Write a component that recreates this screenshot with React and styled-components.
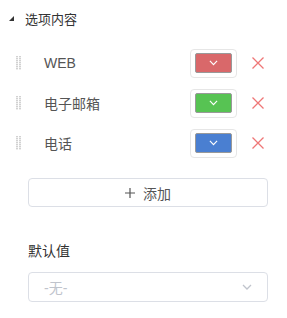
import React from 'react';
import styled, { createGlobalStyle } from 'styled-components';

const GlobalStyle = createGlobalStyle`
  body {
    margin: 0;
    background: #fff;
    font-family: "Liberation Sans", "Noto Sans CJK SC", sans-serif;
  }
`;

const Panel = styled.div`
  width: 287px;
  height: 318px;
  display: flex;
  flex-direction: column;
`;

const Header = styled.div`
  height: 36px;
  display: flex;
  align-items: center;
  padding-left: 9px;
  font-size: 13px;
  color: #333;
`;

const Caret = styled.span`
  width: 0;
  height: 0;
  border-left: 5px solid transparent;
  border-bottom: 5px solid #333;
  margin-right: 11px;
  margin-top: 1px;
`;

const List = styled.div`
  padding-top: 7px;
  display: flex;
  flex-direction: column;
`;

const Row = styled.div`
  height: 40px;
  display: flex;
  align-items: center;
  padding: 0 23px 0 16px;
`;

const Label = styled.div`
  flex: 1;
  margin-left: 23px;
  font-size: 14px;
  color: #555;
`;

const SwatchBox = styled.div`
  width: 47px;
  height: 29px;
  box-sizing: border-box;
  border: 1px solid #e6e6e6;
  border-radius: 4px;
  display: flex;
  align-items: center;
  justify-content: center;
`;

const Swatch = styled.div`
  width: 37px;
  height: 20px;
  box-sizing: border-box;
  border: 1px solid #999;
  border-radius: 2px;
  background: ${p => p.color};
  display: flex;
  align-items: center;
  justify-content: center;
`;

const RemoveButton = styled.button`
  width: 12px;
  height: 12px;
  padding: 0;
  margin-left: 15px;
  border: none;
  background: none;
  display: flex;
`;

const AddButton = styled.button`
  margin: 15px 0 0 28px;
  width: 240px;
  height: 29px;
  border: 1px solid #dcdfe6;
  border-radius: 4px;
  background: #fff;
  font-family: inherit;
  font-size: 14px;
  color: #555;
  display: flex;
  align-items: center;
  justify-content: center;
  gap: 8px;
  padding: 0;
`;

const FieldLabel = styled.div`
  margin: 34px 0 0 28px;
  line-height: 20px;
  font-size: 14px;
  color: #333;
`;

const Select = styled.div`
  margin: 11px 0 0 28px;
  width: 240px;
  height: 30px;
  box-sizing: border-box;
  border: 1px solid #dcdfe6;
  border-radius: 4px;
  display: flex;
  align-items: center;
  justify-content: space-between;
  padding: 0 15px 0 15px;
  font-size: 14px;
  color: #c0c4cc;
`;

const Grip = () => (
  <svg width="5" height="14" viewBox="0 0 5 14">
    {[0, 1, 2, 3, 4, 5, 6].map(r =>
      [0, 3].map(c => (
        <rect key={`${r}-${c}`} x={c} y={r * 2} width="2" height="1.4" fill="#d2d2d2" />
      ))
    )}
  </svg>
);

const Chevron = ({ color, w = 9 }) => (
  <svg width={w} height={w / 2 + 1} viewBox="0 0 10 6">
    <path d="M1 1 L5 5 L9 1" fill="none" stroke={color} strokeWidth="1.3" />
  </svg>
);

const Cross = () => (
  <svg width="12" height="12" viewBox="0 0 12 12">
    <path d="M0.5 0.5 L11.5 11.5 M11.5 0.5 L0.5 11.5" stroke="#ef7676" strokeWidth="1.3" />
  </svg>
);

const Plus = () => (
  <svg width="10" height="10" viewBox="0 0 10 10">
    <path d="M5 0 V10 M0 5 H10" stroke="#555" strokeWidth="1.2" />
  </svg>
);

const options = [
  { label: 'WEB', color: '#d9686a' },
  { label: '电子邮箱', color: '#57c353' },
  { label: '电话', color: '#4a7fd1' },
];

const App = () => (
  <Panel>
    <GlobalStyle />
    <Header>
      <Caret />
      选项内容
    </Header>
    <List>
      {options.map(o => (
        <Row key={o.label}>
          <Grip />
          <Label>{o.label}</Label>
          <SwatchBox>
            <Swatch color={o.color}>
              <Chevron color="#fff" />
            </Swatch>
          </SwatchBox>
          <RemoveButton>
            <Cross />
          </RemoveButton>
        </Row>
      ))}
    </List>
    <AddButton>
      <Plus />
      <span>添加</span>
    </AddButton>
    <FieldLabel>默认值</FieldLabel>
    <Select>
      <span>-无-</span>
      <Chevron color="#c0c4cc" w={10} />
    </Select>
  </Panel>
);

export default App;
